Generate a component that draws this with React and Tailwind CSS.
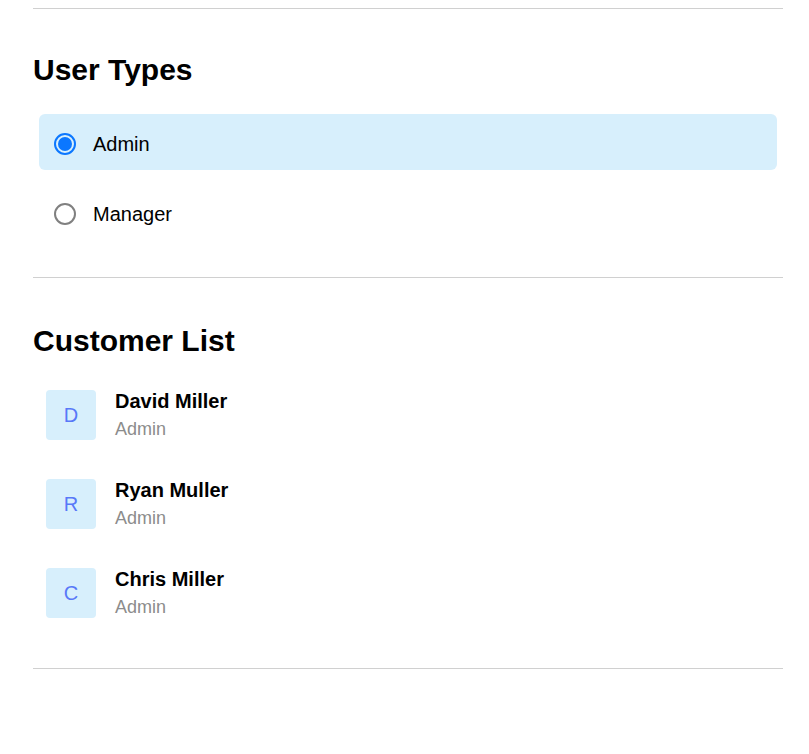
import { useState } from 'react'

const types = ['Admin', 'Manager']

const customers = [
  { name: 'David Miller', role: 'Admin' },
  { name: 'Ryan Muller', role: 'Admin' },
  { name: 'Chris Miller', role: 'Admin' },
]

function Radio({ checked }) {
  if (checked) {
    return (
      <span className="w-[22px] h-[22px] rounded-full border-2 border-[#0b77ff] flex items-center justify-center shrink-0">
        <span className="w-[14px] h-[14px] rounded-full bg-[#0b77ff]" />
      </span>
    )
  }
  return <span className="w-[22px] h-[22px] rounded-full border-2 border-[#808080] shrink-0" />
}

export default function App() {
  const [selected, setSelected] = useState('Admin')

  return (
    <div className="w-[750px] ml-[33px] pt-2 text-black font-['Liberation_Sans',Arial,sans-serif]">
      <div className="h-px bg-[#d0d0d0]" />

      {/* User types */}
      <h2 className="mt-[43px] text-[30px] leading-[36px] font-bold">User Types</h2>
      <div className="mt-[26px] mx-[6px] flex flex-col gap-[14px]">
        {types.map((t) => (
          <label
            key={t}
            onClick={() => setSelected(t)}
            className={`h-14 pt-1 rounded-md flex items-center gap-[17px] pl-[15px] cursor-pointer ${
              selected === t ? 'bg-[#d7effc]' : ''
            }`}
          >
            <Radio checked={selected === t} />
            <span className="text-[20px] leading-6">{t}</span>
          </label>
        ))}
      </div>

      <div className="mt-[37px] h-px bg-[#d0d0d0]" />

      {/* Customer list */}
      <h2 className="mt-[45px] text-[30px] leading-[36px] font-bold">Customer List</h2>
      <div className="mt-[31px] pl-[13px] flex flex-col gap-[37px]">
        {customers.map((c) => (
          <div key={c.name} className="flex items-start gap-[19px]">
            <div className="w-[50px] h-[50px] rounded bg-[#d7effc] text-[#5878f8] text-[20px] flex items-center justify-center shrink-0">
              {c.name[0]}
            </div>
            <div>
              <div className="text-[20px] leading-[22px] font-bold">{c.name}</div>
              <div className="mt-[4px] text-[18px] leading-[26px] text-[#8c8c8c]">{c.role}</div>
            </div>
          </div>
        ))}
      </div>

      <div className="mt-[48px] h-px bg-[#d0d0d0]" />
    </div>
  )
}
